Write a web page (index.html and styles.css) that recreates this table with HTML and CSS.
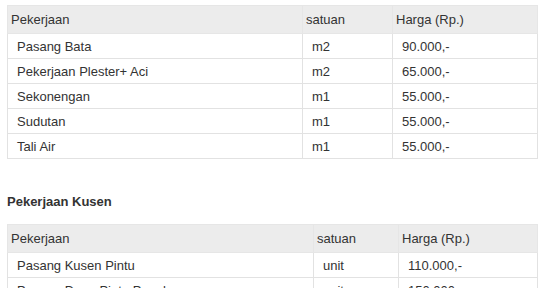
FILE: index.html
```html
<!DOCTYPE html>
<html>
<head>
<meta charset="utf-8">
<link rel="stylesheet" href="styles.css">
</head>
<body>
<table class="price t1">
  <colgroup><col class="c1"><col class="c2"><col class="c3"></colgroup>
  <thead>
    <tr><th>Pekerjaan</th><th>satuan</th><th>Harga (Rp.)</th></tr>
  </thead>
  <tbody>
    <tr><td>Pasang Bata</td><td>m2</td><td>90.000,-</td></tr>
    <tr><td>Pekerjaan Plester+ Aci</td><td>m2</td><td>65.000,-</td></tr>
    <tr><td>Sekonengan</td><td>m1</td><td>55.000,-</td></tr>
    <tr><td>Sudutan</td><td>m1</td><td>55.000,-</td></tr>
    <tr><td>Tali Air</td><td>m1</td><td>55.000,-</td></tr>
  </tbody>
</table>
<h3 class="section">Pekerjaan Kusen</h3>
<table class="price t2">
  <colgroup><col class="c1"><col class="c2"><col class="c3"></colgroup>
  <thead>
    <tr><th>Pekerjaan</th><th>satuan</th><th>Harga (Rp.)</th></tr>
  </thead>
  <tbody>
    <tr><td>Pasang Kusen Pintu</td><td>unit</td><td>110.000,-</td></tr>
    <tr><td>Pasang Daun Pintu Panel</td><td>unit</td><td>150.000,-</td></tr>
  </tbody>
</table>
</body>
</html>
```

FILE: styles.css
```css
html, body {
  margin: 0;
  background: #fff;
}
body {
  padding: 5px 7px;
  font-family: "Liberation Sans", Arial, sans-serif;
  font-size: 13px;
  color: #333;
}
.price {
  border-collapse: collapse;
  table-layout: fixed;
  width: 530px;
}
.price th,
.price td {
  border: 1px solid #e2e2e2;
  text-align: left;
  font-weight: normal;
  line-height: 15px;
  white-space: nowrap;
}
.price th {
  background: #ececec;
  height: 27px;
  padding: 0 3px;
  border-color: #e6e6e6;
}
.price td {
  height: 24px;
  padding: 0 9px;
}
.t1 .c1 { width: 295px; }
.t1 .c2 { width: 90px; }
.t1 .c3 { width: 145px; }
.t2 .c1 { width: 306px; }
.t2 .c2 { width: 85px; }
.t2 .c3 { width: 139px; }
.section {
  margin: 35px 0 15px;
  font-size: 13px;
  line-height: 15px;
  font-weight: bold;
  color: #333;
}
```
